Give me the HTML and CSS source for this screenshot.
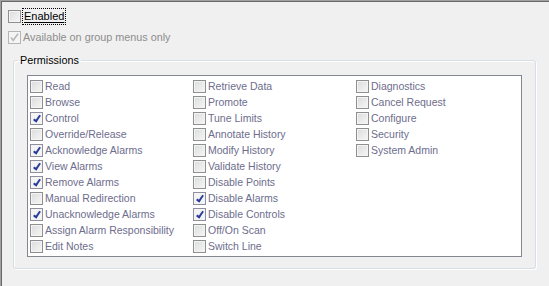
FILE: index.html
```html
<!DOCTYPE html>
<html>
<head>
<meta charset="utf-8">
<link rel="stylesheet" href="styles.css">
</head>
<body>
<div class="window">
  <div class="top-row">
    <span class="cb"></span>
    <span class="focus-label">Enabled</span>
  </div>
  <div class="top-row avail">
    <span class="cb disabled-checked"><svg viewBox="0 0 13 13" width="13" height="13"><path d="M3 6.5 L5.2 9.5 L10 2.8" fill="none" stroke="#b7b7b7" stroke-width="1.6"/></svg></span>
    <span class="gray-label">Available on group menus only</span>
  </div>
  <fieldset class="group">
    <legend>Permissions</legend>
    <div class="listbox">
      <div class="col">
        <div class="item"><span class="cb"></span>Read</div>
        <div class="item"><span class="cb"></span>Browse</div>
        <div class="item"><span class="cb checked"></span>Control</div>
        <div class="item"><span class="cb"></span>Override/Release</div>
        <div class="item"><span class="cb checked"></span>Acknowledge Alarms</div>
        <div class="item"><span class="cb checked"></span>View Alarms</div>
        <div class="item"><span class="cb checked"></span>Remove Alarms</div>
        <div class="item"><span class="cb"></span>Manual Redirection</div>
        <div class="item"><span class="cb checked"></span>Unacknowledge Alarms</div>
        <div class="item"><span class="cb"></span>Assign Alarm Responsibility</div>
        <div class="item"><span class="cb"></span>Edit Notes</div>
      </div>
      <div class="col">
        <div class="item"><span class="cb"></span>Retrieve Data</div>
        <div class="item"><span class="cb"></span>Promote</div>
        <div class="item"><span class="cb"></span>Tune Limits</div>
        <div class="item"><span class="cb"></span>Annotate History</div>
        <div class="item"><span class="cb"></span>Modify History</div>
        <div class="item"><span class="cb"></span>Validate History</div>
        <div class="item"><span class="cb"></span>Disable Points</div>
        <div class="item"><span class="cb checked"></span>Disable Alarms</div>
        <div class="item"><span class="cb checked"></span>Disable Controls</div>
        <div class="item"><span class="cb"></span>Off/On Scan</div>
        <div class="item"><span class="cb"></span>Switch Line</div>
      </div>
      <div class="col">
        <div class="item"><span class="cb"></span>Diagnostics</div>
        <div class="item"><span class="cb"></span>Cancel Request</div>
        <div class="item"><span class="cb"></span>Configure</div>
        <div class="item"><span class="cb"></span>Security</div>
        <div class="item"><span class="cb"></span>System Admin</div>
      </div>
    </div>
  </fieldset>
</div>
</body>
</html>
```
FILE: styles.css
```css
html, body {
  margin: 0;
  padding: 0;
}
body {
  background: #f0f0f0;
  font-family: "Liberation Sans", Arial, sans-serif;
  font-size: 10.5px;
}
.window {
  width: 549px;
  height: 286px;
  box-sizing: border-box;
  border-top: 1px solid #a0a0a0;
  border-left: 1px solid #a0a0a0;
  box-shadow: inset 1px 1px 0 #696969;
  padding: 7px 0 0 7px;
}
.top-row {
  display: flex;
  align-items: center;
  height: 16px;
  gap: 2px;
}
.top-row.avail {
  margin-top: 5px;
}
.cb {
  flex: none;
  width: 13px;
  height: 13px;
  box-sizing: border-box;
  border: 1px solid #8e8f8f;
  background: linear-gradient(135deg, #dcdcdc, #f6f6f6);
  box-shadow: inset 0 0 0 1px #f4f4f4;
  display: inline-block;
  position: relative;
}
.cb.checked {
  border-color: #8e8f9f;
  background: #f4f4f4;
}
.cb.checked::after {
  content: "";
  position: absolute;
  left: 4px;
  top: 1px;
  width: 2px;
  height: 6px;
  border-right: 2px solid #2b3c9b;
  border-bottom: 2px solid #2b3c9b;
  transform: rotate(35deg);
}
.cb.disabled-checked {
  border-color: #b5b5b5;
  background: #f4f4f4;
  box-shadow: none;
}
.cb.disabled-checked svg {
  display: block;
  margin: -1px;
}
.focus-label {
  color: #000;
  outline: 1px dotted #000;
  outline-offset: 0;
  padding: 0 1px;
  line-height: 15px;
  text-decoration: underline;
  text-decoration-thickness: 1px;
  text-underline-offset: 2px;
  font-size: 11px;
}
.gray-label {
  color: #8d8d8d;
  font-size: 10.8px;
}
.group {
  margin: 9px 0 0 5px;
  width: 523px;
  height: 215px;
  box-sizing: border-box;
  border: 1px solid #d5dfe5;
  border-radius: 3px;
  box-shadow: 1px 1px 0 #ffffff inset, 1px 1px 0 #ffffff;
  padding: 9px 13px 12px 13px;
}
.group legend {
  padding: 0 2px;
  margin-left: -9px;
  color: #000;
  font-size: 10.8px;
}
.listbox {
  background: #fff;
  border: 1px solid #828790;
  height: 182px;
  box-sizing: border-box;
  display: grid;
  grid-template-columns: 163px 163px 1fr;
  padding: 2px 0 0 2px;
}
.item {
  display: flex;
  align-items: center;
  gap: 2px;
  height: 16px;
  color: #6d6d8d;
  white-space: nowrap;
}
```
